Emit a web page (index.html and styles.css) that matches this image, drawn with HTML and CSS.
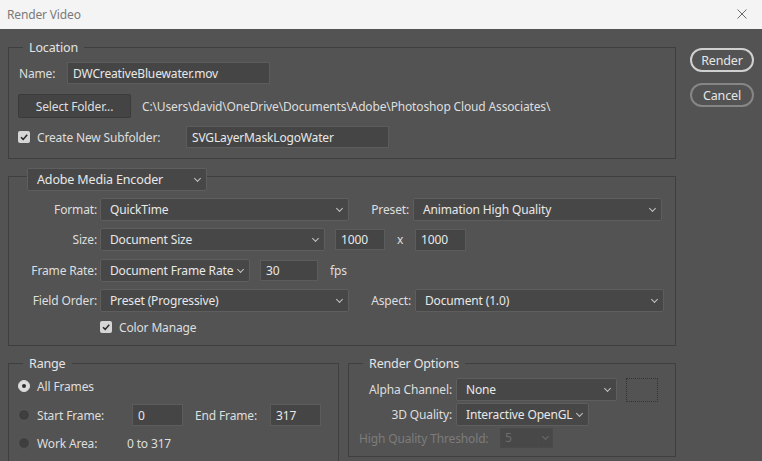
FILE: index.html
```html
<!DOCTYPE html>
<html>
<head>
<meta charset="utf-8">
<title>Render Video</title>
<link rel="stylesheet" href="styles.css">
</head>
<body>
<div class="window">
  <div class="titlebar">
    <span class="title">Render Video</span>
    <svg class="close" width="12" height="12" viewBox="0 0 12 12"><path d="M1.5 1.5 L10.5 10.5 M10.5 1.5 L1.5 10.5" stroke="#6a6a6a" stroke-width="1" fill="none"/></svg>
  </div>
  <div class="content">
    <div class="main">
      <fieldset class="group location">
        <legend class="legend">Location</legend>
        <div class="loc-body">
          <div class="row r-name">
            <span class="lbl name-lbl">Name:</span>
            <div class="input w-name">DWCreativeBluewater.mov</div>
          </div>
          <div class="row r-folder">
            <div class="btn folder-btn">Select Folder...</div>
            <span class="path">C:\Users\david\OneDrive\Documents\Adobe\Photoshop Cloud Associates\</span>
          </div>
          <div class="row r-sub">
            <span class="check"><svg width="12" height="12" viewBox="0 0 12 12"><path d="M3 6.2 L5.2 8.4 L9.2 3.8" stroke="#2b2b2b" stroke-width="1.6" fill="none"/></svg></span>
            <span class="lbl sub-lbl">Create New Subfolder:</span>
            <div class="input w-sub">SVGLayerMaskLogoWater</div>
          </div>
        </div>
      </fieldset>

      <fieldset class="group encoder">
        <legend class="legend legend-select">
          <div class="select w-enc">Adobe Media Encoder<span class="chev"></span></div>
        </legend>
        <div class="enc-body">
          <div class="row r-format">
            <span class="flbl">Format:</span>
            <div class="select w-wide">QuickTime<span class="chev"></span></div>
            <span class="rlbl preset-lbl">Preset:</span>
            <div class="select w-wide">Animation High Quality<span class="chev"></span></div>
          </div>
          <div class="row r-size">
            <span class="flbl">Size:</span>
            <div class="select w-size">Document Size<span class="chev"></span></div>
            <div class="input w-num">1000</div>
            <span class="times">x</span>
            <div class="input w-num2">1000</div>
          </div>
          <div class="row r-rate">
            <span class="flbl">Frame Rate:</span>
            <div class="select w-rate">Document Frame Rate<span class="chev"></span></div>
            <div class="input w-fps">30</div>
            <span class="fps">fps</span>
          </div>
          <div class="row r-field">
            <span class="flbl">Field Order:</span>
            <div class="select w-wide">Preset (Progressive)<span class="chev"></span></div>
            <span class="rlbl aspect-lbl">Aspect:</span>
            <div class="select w-wide">Document (1.0)<span class="chev"></span></div>
          </div>
          <div class="row r-color">
            <span class="check"><svg width="12" height="12" viewBox="0 0 12 12"><path d="M3 6.2 L5.2 8.4 L9.2 3.8" stroke="#2b2b2b" stroke-width="1.6" fill="none"/></svg></span>
            <span class="lbl">Color Manage</span>
          </div>
        </div>
      </fieldset>

      <div class="bottom">
        <fieldset class="group range">
          <legend class="legend">Range</legend>
          <div class="range-body">
            <div class="row r-all">
              <span class="radio on"></span>
              <span class="lbl">All Frames</span>
            </div>
            <div class="row r-start">
              <span class="radio"></span>
              <span class="lbl start-lbl">Start Frame:</span>
              <div class="input w-frame">0</div>
              <span class="lbl end-lbl">End Frame:</span>
              <div class="input w-frame">317</div>
            </div>
            <div class="row r-work">
              <span class="radio"></span>
              <span class="lbl work-lbl">Work Area:</span>
              <span class="lbl">0 to 317</span>
            </div>
          </div>
        </fieldset>
        <fieldset class="group options">
          <legend class="legend">Render Options</legend>
          <div class="opt-body">
            <div class="row r-alpha">
              <span class="olbl">Alpha Channel:</span>
              <div class="select w-alpha">None<span class="chev"></span></div>
              <div class="swatch"></div>
            </div>
            <div class="row r-3d">
              <span class="olbl">3D Quality:</span>
              <div class="select w-3d">Interactive OpenGL<span class="chev"></span></div>
            </div>
            <div class="row r-thresh">
              <span class="dis-lbl">High Quality Threshold:</span>
              <div class="dis-input"><span class="dis-val">5</span><span class="dis-btn"><span class="chev dis-chev"></span></span></div>
            </div>
          </div>
        </fieldset>
      </div>
    </div>
    <div class="side">
      <div class="pill primary">Render</div>
      <div class="pill">Cancel</div>
    </div>
  </div>
</div>
</body>
</html>
```

FILE: styles.css
```css
* { box-sizing: border-box; }
html, body {
  margin: 0;
  padding: 0;
  width: 762px;
  height: 461px;
  overflow: hidden;
  background: #535353;
}
body {
  font-family: "Noto Sans", "Open Sans", sans-serif;
  font-size: 12px;
  letter-spacing: -0.15px;
  color: #dedede;
}
.window { width: 762px; height: 461px; overflow: hidden; }
.titlebar {
  height: 29px;
  background: #f4f4f4;
  display: flex;
  align-items: center;
  justify-content: space-between;
  padding: 0 14px 0 7px;
}
.title { color: #7a7a7a; font-size: 12px; margin-top: -1px; }
.close { display: block; margin-top: -1px; }

.content { display: flex; align-items: flex-start; }
.main { width: 676px; padding-left: 8px; }
.side {
  display: flex;
  flex-direction: column;
  gap: 11px;
  margin-left: 14px;
  padding-top: 19px;
}
.pill {
  width: 64px;
  height: 24px;
  border: 2px solid #868686;
  border-radius: 12px;
  display: flex;
  align-items: center;
  justify-content: center;
  color: #e6e6e6;
  font-size: 12.5px;
}
.pill.primary { border-color: #d0d0d0; }

.group {
  margin: 0;
  padding: 0;
  border: 1px solid #3f3f3f;
  min-width: 0;
}
.legend {
  margin-left: 14px;
  padding: 0 6px;
  height: 17px;
  line-height: 17px;
  color: #e4e4e4;
  font-size: 12.5px;
}
.location { margin-top: 10px; width: 668px; }
.loc-body { padding: 6px 10px 10px 10px; }

.row { display: flex; align-items: center; }
.lbl { white-space: nowrap; }

.input {
  height: 22px;
  background: #454545;
  border: 1px solid #5c5c5c;
  padding: 0 5px;
  display: flex;
  align-items: center;
  color: #e8e8e8;
  white-space: nowrap;
}
.select {
  position: relative;
  height: 23px;
  background: #474747;
  border: 1px solid #5e5e5e;
  border-radius: 2px;
  padding: 0 9px;
  display: flex;
  align-items: center;
  color: #e8e8e8;
  white-space: nowrap;
}
.chev {
  position: absolute;
  right: 6px;
  top: 50%;
  width: 5px;
  height: 5px;
  margin-top: -4px;
  border-right: 1px solid #c4c4c4;
  border-bottom: 1px solid #c4c4c4;
  transform: rotate(45deg);
}

.r-name { height: 22px; }
.name-lbl { width: 48px; }
.w-name { width: 203px; }
.r-folder { height: 24px; margin-top: 10px; margin-left: -1px; }
.btn {
  height: 24px;
  background: #444444;
  border: 1px solid #3b3b3b;
  border-radius: 2px;
  display: flex;
  align-items: center;
  justify-content: center;
  white-space: nowrap;
}
.folder-btn { width: 113px; }
.path { margin-left: 11px; white-space: nowrap; }
.r-sub { height: 22px; margin-top: 8px; margin-left: -1px; }
.check {
  width: 12px;
  height: 12px;
  background: #d6d6d6;
  border-radius: 2px;
  display: block;
  flex: none;
}
.check svg { display: block; }
.sub-lbl { margin-left: 7px; width: 149px; }
.w-sub { width: 203px; }

.encoder { margin-top: 9px; width: 668px; }
.legend-select { margin-left: 18px; padding: 0; height: 17px; line-height: normal; }
.w-enc { width: 180px; font-size: 12.5px; }
.enc-body { padding: 13px 10px 10px 0; }
.flbl { width: 88px; text-align: right; margin-right: 3px; white-space: nowrap; }
.rlbl { text-align: right; white-space: nowrap; margin-right: 4px; }
.preset-lbl { width: 60px; }
.aspect-lbl { width: 62px; }
.w-wide { width: 249px; }
.r-format, .r-size, .r-rate, .r-field { height: 23px; }
.r-size { margin-top: 7px; }
.r-rate { margin-top: 8px; }
.r-field { margin-top: 7px; }
.w-size { width: 225px; }
.w-num { width: 50px; height: 21px; margin-left: 10px; }
.times { width: 30px; text-align: center; }
.w-num2 { width: 51px; height: 22px; }
.w-rate { width: 150px; }
.w-fps { width: 58px; height: 21px; margin-left: 10px; }
.fps { margin-left: 12px; }
.r-color { height: 16px; margin-top: 7px; padding-left: 91px; }
.r-color .lbl { margin-left: 7px; }

.bottom { display: flex; gap: 9px; margin-top: 9px; align-items: flex-start; }
.range { width: 331px; height: 106px; border-bottom: none; }
.options { width: 328px; }
.range-body { padding: 3px 9px 0 9px; }
.r-all, .r-start, .r-work { height: 22px; }
.r-start { margin-top: 7px; }
.r-work { margin-top: 6px; }
.radio {
  width: 12px;
  height: 12px;
  border-radius: 50%;
  background: #3f3f3f;
  border: 1px solid #5a5a5a;
  margin-right: 7px;
  flex: none;
  display: flex;
  align-items: center;
  justify-content: center;
}
.radio.on { background: #dcdcdc; border-color: #dcdcdc; }
.radio.on::after {
  content: "";
  width: 4px;
  height: 4px;
  border-radius: 50%;
  background: #2e2e2e;
}
.start-lbl { width: 95px; }
.w-frame { width: 51px; height: 22px; }
.end-lbl { margin-left: 12px; width: 75px; }
.work-lbl { width: 90px; }

.opt-body { padding: 6px 10px 8px 10px; }
.olbl { width: 93px; text-align: right; margin-right: 4px; white-space: nowrap; }
.r-alpha, .r-3d { height: 23px; }
.r-3d { margin-top: 2px; }
.w-alpha { width: 161px; }
.w-3d { width: 133px; }
.swatch {
  width: 32px;
  height: 24px;
  margin-left: 9px;
  border: 1px dotted #333333;
}
.r-thresh { height: 20px; margin-top: 2px; }
.dis-lbl { color: #7c7c7c; width: 141px; white-space: nowrap; }
.dis-input {
  width: 53px;
  height: 20px;
  display: flex;
  border: 1px solid #4a4a4a;
  background: #484848;
}
.dis-val { flex: 1; color: #6e6e6e; padding-left: 4px; line-height: 18px; }
.dis-btn { position: relative; width: 14px; border-left: 1px solid #4a4a4a; }
.dis-chev { right: 4px; border-color: #6a6a6a; }
```
